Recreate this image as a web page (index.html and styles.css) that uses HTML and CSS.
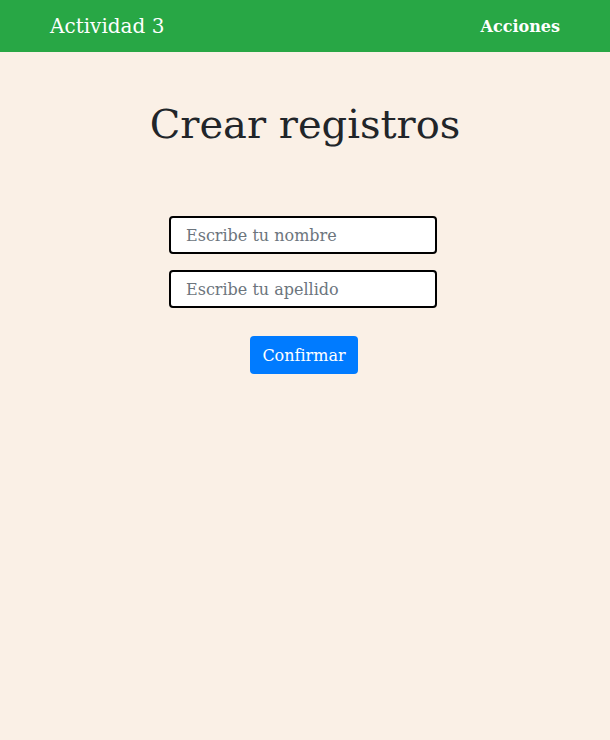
FILE: index.html
```html
<!DOCTYPE html>
<html lang="es">
<head>
<meta charset="utf-8">
<title>Actividad 3</title>
<link rel="stylesheet" href="styles.css">
</head>
<body>
<nav class="navbar">
  <span class="brand">Actividad 3</span>
  <span class="nav-link">Acciones</span>
</nav>
<main class="content">
  <h1 class="title">Crear registros</h1>
  <form class="form">
    <input class="field" type="text" placeholder="Escribe tu nombre">
    <input class="field" type="text" placeholder="Escribe tu apellido">
    <button class="btn" type="button">Confirmar</button>
  </form>
</main>
</body>
</html>
```
FILE: styles.css
```css
html, body {
  margin: 0;
  padding: 0;
}
body {
  background: #faf0e6;
  font-family: "DejaVu Serif", serif;
  color: #212529;
  min-height: 740px;
}
.navbar {
  height: 52px;
  background: #28a745;
  display: flex;
  align-items: center;
  justify-content: space-between;
  padding: 0 50px;
  color: #fff;
}
.brand {
  font-size: 20px;
}
.nav-link {
  font-size: 16px;
  font-weight: bold;
}
.content {
  display: flex;
  flex-direction: column;
  align-items: center;
}
.title {
  font-size: 40px;
  font-weight: normal;
  margin: 48px 0 0;
  line-height: 48px;
}
.form {
  margin-top: 68px;
  display: flex;
  flex-direction: column;
  align-items: center;
  gap: 16px;
}
.field {
  box-sizing: border-box;
  width: 268px;
  height: 38px;
  margin-right: 4px;
  border: 2px solid #000;
  border-radius: 4px;
  background: #fff;
  padding: 0 15px;
  font-family: "DejaVu Serif", serif;
  font-size: 16px;
  color: #495057;
}
.field::placeholder {
  color: #6c757d;
}
.btn {
  margin-top: 12px;
  margin-right: 2px;
  box-sizing: border-box;
  height: 38px;
  width: 108px;
  padding: 0;
  border: none;
  border-radius: 4px;
  background: #007bff;
  color: #fff;
  font-family: "DejaVu Serif", serif;
  font-size: 16px;
}
```
